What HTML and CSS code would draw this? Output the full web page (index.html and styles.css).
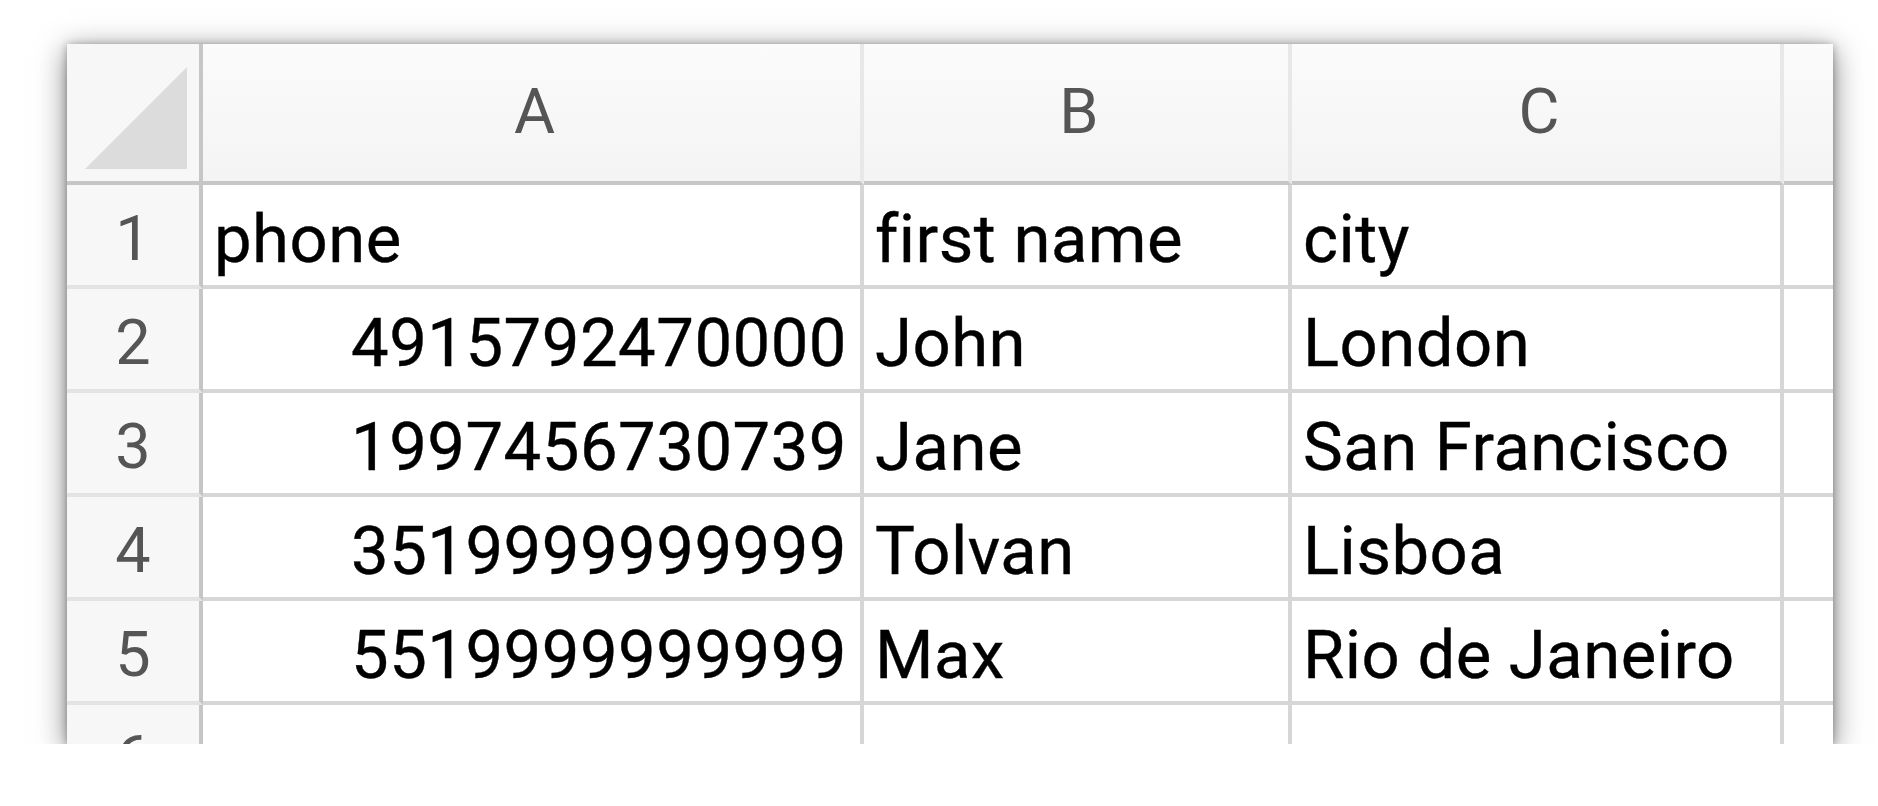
FILE: index.html
```html
<!DOCTYPE html>
<html lang="en">
<head>
<meta charset="utf-8">
<title>Sheet</title>
<link rel="stylesheet" href="styles.css">
</head>
<body>
<div class="sheet">
  <div class="corner"><div class="tri"></div></div>
  <div class="colhead">A</div>
  <div class="colhead">B</div>
  <div class="colhead">C</div>
  <div class="colhead last"></div>

  <div class="rowhead">1</div>
  <div class="cell">phone</div>
  <div class="cell">first name</div>
  <div class="cell">city</div>
  <div class="cell last"></div>

  <div class="rowhead">2</div>
  <div class="cell num">4915792470000</div>
  <div class="cell">John</div>
  <div class="cell">London</div>
  <div class="cell last"></div>

  <div class="rowhead">3</div>
  <div class="cell num">1997456730739</div>
  <div class="cell">Jane</div>
  <div class="cell">San Francisco</div>
  <div class="cell last"></div>

  <div class="rowhead">4</div>
  <div class="cell num">3519999999999</div>
  <div class="cell">Tolvan</div>
  <div class="cell">Lisboa</div>
  <div class="cell last"></div>

  <div class="rowhead">5</div>
  <div class="cell num">5519999999999</div>
  <div class="cell">Max</div>
  <div class="cell">Rio de Janeiro</div>
  <div class="cell last"></div>

  <div class="rowhead">6</div>
  <div class="cell"></div>
  <div class="cell"></div>
  <div class="cell"></div>
  <div class="cell last"></div>
</div>
</body>
</html>
```

FILE: styles.css
```css
html, body {
  margin: 0;
  padding: 0;
  background: #ffffff;
}

body {
  padding: 44px 0 0 67px;
  font-family: Roboto, "Liberation Sans", Arial, sans-serif;
}

.sheet {
  width: 1766px;
  height: 700px;
  overflow: hidden;
  background: #ffffff;
  box-shadow: 0 6px 28px rgba(0, 0, 0, 0.5), 0 1px 8px rgba(0, 0, 0, 0.3);
  display: grid;
  grid-template-columns: 136px 661px 428px 492px 49px;
  grid-template-rows: 141px repeat(6, 104px);
}

.corner {
  background: #f7f7f7;
  border-right: 4px solid #c6c6c6;
  border-bottom: 4px solid #c6c6c6;
  box-sizing: border-box;
  padding: 23px 12px 0 18px;
}

.tri {
  width: 102px;
  height: 102px;
  background: #dcdcdc;
  clip-path: polygon(100% 0, 100% 100%, 0 100%);
}

.colhead {
  box-sizing: border-box;
  background: linear-gradient(#fbfbfb, #f4f4f4);
  border-right: 4px solid #e8e8e8;
  border-bottom: 4px solid #c6c6c6;
  color: #555555;
  font-size: 63px;
  display: flex;
  align-items: center;
  justify-content: center;
  padding: 0 0 2px 6px;
}

.rowhead {
  box-sizing: border-box;
  background: #f7f7f7;
  border-right: 4px solid #c6c6c6;
  border-bottom: 4px solid #e3e3e3;
  color: #555555;
  font-size: 63px;
  text-align: center;
  line-height: 100px;
  padding-top: 4px;
}

.cell {
  box-sizing: border-box;
  border-right: 4px solid #d6d6d6;
  border-bottom: 4px solid #d6d6d6;
  color: #000000;
  font-size: 67px;
  letter-spacing: 0.5px;
  line-height: 96px;
  padding: 6px 12px 0 11px;
  white-space: nowrap;
  overflow: hidden;
  -webkit-text-stroke: 0.4px #000000;
}

.cell.num {
  text-align: right;
  padding-right: 13px;
}

.last {
  border-right: none;
}
```
